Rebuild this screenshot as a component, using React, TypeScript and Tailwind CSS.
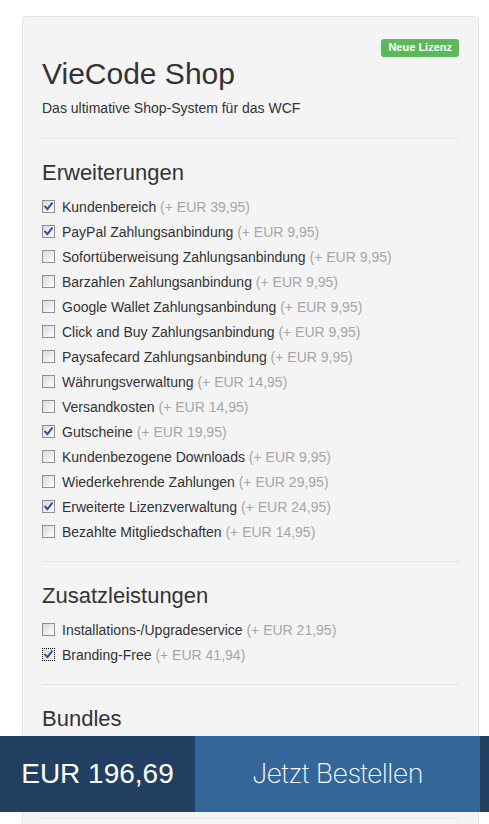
type Option = {
  name: string;
  price: string;
  checked?: boolean;
  focused?: boolean;
};

const extensions: Option[] = [
  { name: "Kundenbereich", price: "39,95", checked: true },
  { name: "PayPal Zahlungsanbindung", price: "9,95", checked: true },
  { name: "Sofortüberweisung Zahlungsanbindung", price: "9,95" },
  { name: "Barzahlen Zahlungsanbindung", price: "9,95" },
  { name: "Google Wallet Zahlungsanbindung", price: "9,95" },
  { name: "Click and Buy Zahlungsanbindung", price: "9,95" },
  { name: "Paysafecard Zahlungsanbindung", price: "9,95" },
  { name: "Währungsverwaltung", price: "14,95" },
  { name: "Versandkosten", price: "14,95" },
  { name: "Gutscheine", price: "19,95", checked: true },
  { name: "Kundenbezogene Downloads", price: "9,95" },
  { name: "Wiederkehrende Zahlungen", price: "29,95" },
  { name: "Erweiterte Lizenzverwaltung", price: "24,95", checked: true },
  { name: "Bezahlte Mitgliedschaften", price: "14,95" },
];

const services: Option[] = [
  { name: "Installations-/Upgradeservice", price: "21,95" },
  { name: "Branding-Free", price: "41,94", checked: true, focused: true },
];

const CheckBox = ({ checked, focused }: { checked?: boolean; focused?: boolean }) => (
  <span
    className={
      focused
        ? "relative flex h-[13px] w-[13px] shrink-0 border border-dotted border-black bg-linear-to-br from-[#d9d9d9] to-white"
        : "relative flex h-[13px] w-[13px] shrink-0 border border-[#8f8f8f] bg-linear-to-br from-[#d9d9d9] to-white"
    }
  >
    {checked && (
      <svg viewBox="0 0 11 11" className="h-[11px] w-[11px]">
        <path
          d="M2.2 5.6 L4.4 8.2 L8.9 2.4"
          fill="none"
          stroke="#2a4da6"
          strokeWidth={1.9}
          strokeLinecap="square"
        />
      </svg>
    )}
  </span>
);

const OptionList = ({ items }: { items: Option[] }) => (
  <ul className="mt-2">
    {items.map((item) => (
      <li key={item.name} className="flex h-[25px] items-center">
        <CheckBox checked={item.checked} focused={item.focused} />
        <span className="ml-[7px] text-[14px] leading-5 text-[#333]">
          {item.name}{" "}
          <span className="text-[#a6a6a6]">(+ EUR {item.price})</span>
        </span>
      </li>
    ))}
  </ul>
);

const Section = ({ title, items }: { title: string; items: Option[] }) => (
  <div className="border-t border-[#e2e2e2] pt-[21px] pb-[17px]">
    <h3 className="text-[22px] leading-[26px] text-[#333]">{title}</h3>
    <OptionList items={items} />
  </div>
);

export default function App() {
  return (
    <div className="min-h-screen bg-white pb-10 font-['Liberation_Sans',Arial,sans-serif]">
      <div className="ml-[22px] mt-4 w-[457px] rounded border border-[#e3e3e3] bg-[#f4f4f4] px-[19px] pt-[22px]">
        <div className="flex justify-end">
          <span className="rounded-[3px] bg-[#5cb85c] px-[7px] pt-[2px] pb-[3px] text-[11px] font-bold leading-[13px] text-white">
            Neue Lizenz
          </span>
        </div>
        <h1 className="text-[30px] leading-[33px] text-[#333]">VieCode Shop</h1>
        <p className="mt-2 text-[14px] leading-5 text-[#333]">
          Das ultimative Shop-System für das WCF
        </p>
        <div className="mt-5">
          <Section title="Erweiterungen" items={extensions} />
          <Section title="Zusatzleistungen" items={services} />
          <div className="border-t border-[#e2e2e2] pt-[21px]">
            <h3 className="text-[22px] leading-[26px] text-[#333]">Bundles</h3>
            <div className="h-[86px]" />
          </div>
          <div className="h-24 border-t border-[#e2e2e2]" />
        </div>
      </div>

      {/* Order bar */}
      <div className="fixed bottom-[12px] left-0 flex h-[76px] w-full bg-[#213f60]">
        <div className="flex w-[195px] items-center justify-center text-[28px] text-white">
          EUR 196,69
        </div>
        <button className="flex w-[285px] items-center justify-center bg-[#35669a] font-['Inter',sans-serif] text-[27px] font-extralight tracking-[-0.6px] text-white">
          Jetzt Bestellen
        </button>
      </div>
    </div>
  );
}
